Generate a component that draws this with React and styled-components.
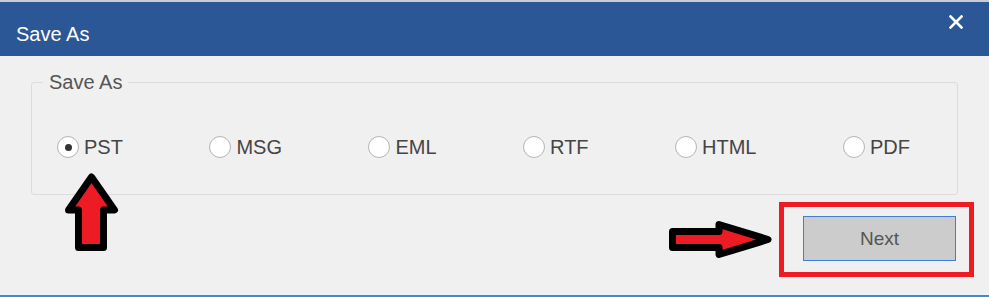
import styled, { createGlobalStyle } from "styled-components";

const GlobalStyle = createGlobalStyle`
  html, body {
    margin: 0;
    padding: 0;
    background: #f0f0f0;
  }
  * {
    box-sizing: border-box;
  }
`;

const Frame = styled.div`
  display: flex;
  flex-direction: column;
  width: 989px;
  height: 297px;
  font-family: "Liberation Sans", Arial, sans-serif;
`;

const TopStrip = styled.div`
  height: 2px;
  background: #c9ccd2;
`;

const TitleBar = styled.div`
  display: flex;
  justify-content: space-between;
  align-items: flex-start;
  height: 54px;
  padding: 20px 26px 0 16px;
  background: #2b5797;
  color: #ffffff;
`;

const Title = styled.div`
  font-size: 20px;
  line-height: 24px;
`;

const CloseButton = styled.div`
  display: flex;
  margin-top: -7px;
  cursor: pointer;
`;

const Body = styled.div`
  position: relative;
  flex: 1;
  display: flex;
  flex-direction: column;
  padding: 16px 15px 0 31px;
  background: #f0f0f0;
  border-bottom: 2px solid #3c8ad8;
`;

const Group = styled.fieldset`
  margin: 0 16px 0 0;
  padding: 0;
  border: 1px solid #dcdcdc;
  border-radius: 3px;
`;

const GroupTitle = styled.legend`
  margin-left: 11px;
  padding: 0 6px;
  font-size: 20px;
  line-height: 20px;
  color: #555555;
`;

const RadioRow = styled.div`
  display: flex;
  justify-content: space-between;
  align-items: center;
  padding: 43px 47px 35px 25px;
`;

const RadioItem = styled.label`
  display: flex;
  align-items: center;
  gap: 5px;
  font-size: 20px;
  line-height: 24px;
  color: #454545;
  cursor: pointer;
`;

const RadioCircle = styled.span`
  display: flex;
  justify-content: center;
  align-items: center;
  width: 22px;
  height: 22px;
  border-radius: 50%;
  border: 1.5px solid #b4b4b4;
  background: #ffffff;

  &::after {
    content: "";
    width: 7px;
    height: 7px;
    border-radius: 50%;
    background: ${(props) => (props.checked ? "#333333" : "transparent")};
  }
`;

const Footer = styled.div`
  display: flex;
  justify-content: flex-end;
  align-items: center;
  gap: 4px;
  margin-top: 7px;
`;

const Highlight = styled.div`
  padding: 9px 13px 11px 19px;
  border: 5px solid #ed1c24;
`;

const NextButton = styled.button`
  width: 153px;
  height: 45px;
  padding: 0;
  border: 1px solid #3c7fd8;
  background: #cccccc;
  color: #555555;
  font-family: "Liberation Sans", Arial, sans-serif;
  font-size: 19px;
  cursor: pointer;
`;

const UpArrow = styled.svg`
  position: absolute;
  top: 112px;
  left: 60px;
  z-index: 2;
`;

const formats = ["PST", "MSG", "EML", "RTF", "HTML", "PDF"];

export default function App() {
  return (
    <Frame>
      <GlobalStyle />
      <TopStrip />
      <TitleBar>
        <Title>Save As</Title>
        <CloseButton>
          <svg width="14" height="14" viewBox="0 0 14 14">
            <path d="M1.5 1.5 L12.5 12.5 M12.5 1.5 L1.5 12.5" stroke="#ffffff" strokeWidth="2.6" strokeLinecap="square" />
          </svg>
        </CloseButton>
      </TitleBar>
      <Body>
        <Group>
          <GroupTitle>Save As</GroupTitle>
          <RadioRow>
            {formats.map((f) => (
              <RadioItem key={f}>
                <RadioCircle checked={f === "PST"} />
                {f}
              </RadioItem>
            ))}
          </RadioRow>
        </Group>
        <Footer>
          <svg width="108" height="42" viewBox="0 0 108 42">
            <path
              d="M5.5 12.5 L52 12.5 L52 5.5 L101 20.5 L52 35.5 L52 28.5 L5.5 28.5 Z"
              fill="#ed1c24"
              stroke="#000000"
              strokeWidth="7"
              strokeLinejoin="round"
            />
          </svg>
          <Highlight>
            <NextButton>Next</NextButton>
          </Highlight>
        </Footer>
        <UpArrow width="64" height="88" viewBox="0 0 64 88">
          <path
            d="M31.5 9 L54.5 42 L43.5 42 L43.5 79.5 L18.5 79.5 L18.5 42 L8.5 42 Z"
            fill="#ed1c24"
            stroke="#000000"
            strokeWidth="7"
            strokeLinejoin="round"
          />
        </UpArrow>
      </Body>
    </Frame>
  );
}
